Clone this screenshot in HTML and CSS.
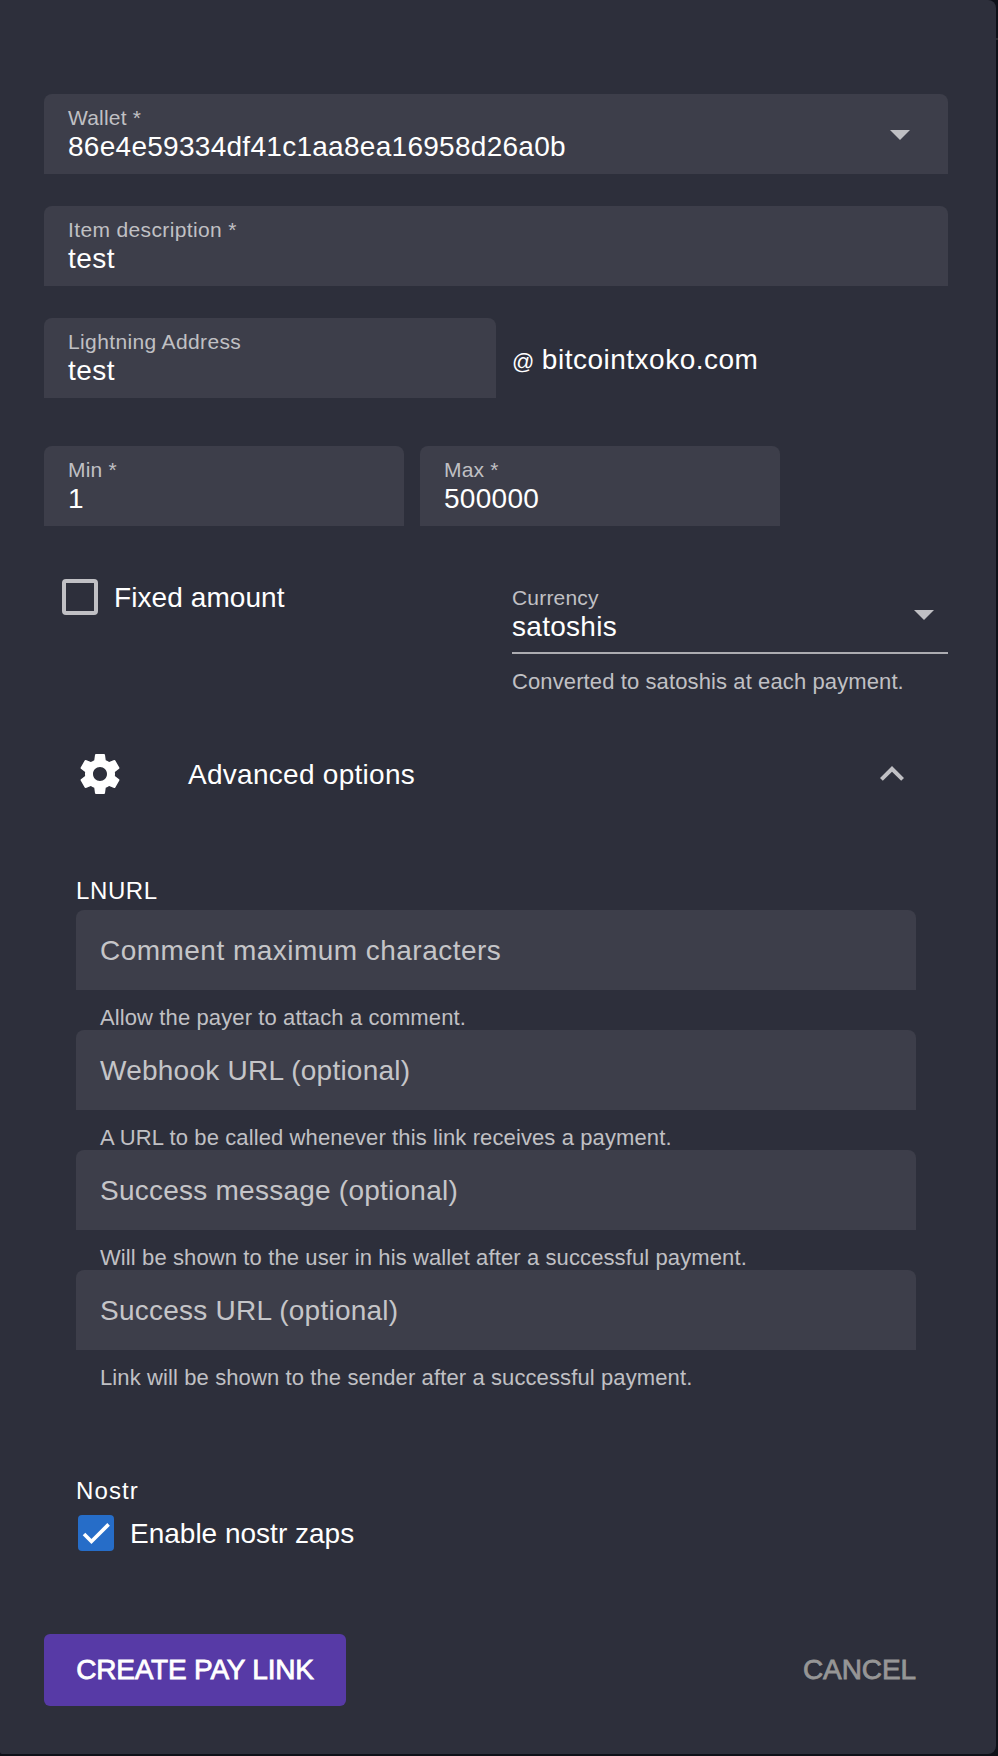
FILE: index.html
```html
<!DOCTYPE html>
<html lang="en">
<head>
<meta charset="utf-8">
<title>Pay link</title>
<link rel="stylesheet" href="styles.css">
</head>
<body>
<form class="dialog">
  <div class="field">
    <div class="field-text"><span class="label tight">Wallet *</span><span class="value">86e4e59334df41c1aa8ea16958d26a0b</span></div>
    <svg class="icon" viewBox="0 0 24 24"><path d="M7 10l5 5 5-5z"/></svg>
  </div>
  <div class="field">
    <div class="field-text"><span class="label">Item description *</span><span class="value loose">test</span></div>
  </div>
  <div class="row address-row">
    <div class="field address">
      <div class="field-text"><span class="label">Lightning Address</span><span class="value loose">test</span></div>
    </div>
    <div class="domain"><span class="at">@</span><span>bitcointxoko.com</span></div>
  </div>
  <div class="row amount-row">
    <div class="field amount">
      <div class="field-text"><span class="label tight">Min *</span><span class="value">1</span></div>
    </div>
    <div class="field amount">
      <div class="field-text"><span class="label tight">Max *</span><span class="value">500000</span></div>
    </div>
  </div>
  <div class="row currency-row">
    <div class="check fixed"><span class="box"></span><span class="check-label">Fixed amount</span></div>
    <div class="currency">
      <div class="field underlined">
        <div class="field-text"><span class="label tight">Currency</span><span class="value">satoshis</span></div>
        <svg class="icon" viewBox="0 0 24 24"><path d="M7 10l5 5 5-5z"/></svg>
      </div>
      <div class="hint currency-hint">Converted to satoshis at each payment.</div>
    </div>
  </div>
  <div class="advanced">
    <svg class="icon gear" viewBox="0 0 24 24"><path d="M19.43 12.98c.04-.32.07-.64.07-.98s-.03-.66-.07-.98l2.11-1.65c.19-.15.24-.42.12-.64l-2-3.46c-.12-.22-.39-.3-.61-.22l-2.49 1c-.52-.4-1.08-.73-1.69-.98l-.38-2.65C14.46 2.18 14.25 2 14 2h-4c-.25 0-.46.18-.49.42l-.38 2.65c-.61.25-1.17.59-1.69.98l-2.49-1c-.23-.09-.49 0-.61.22l-2 3.46c-.13.22-.07.49.12.64l2.11 1.65c-.04.32-.07.65-.07.98s.03.66.07.98l-2.11 1.65c-.19.15-.24.42-.12.64l2 3.46c.12.22.39.3.61.22l2.49-1c.52.4 1.08.73 1.69.98l.38 2.65c.03.24.24.42.49.42h4c.25 0 .46-.18.49-.42l.38-2.65c.61-.25 1.17-.59 1.69-.98l2.49 1c.23.09.49 0 .61-.22l2-3.46c.12-.22.07-.49-.12-.64l-2.11-1.65zM12 15.5c-1.93 0-3.5-1.57-3.5-3.5s1.57-3.5 3.5-3.5 3.5 1.57 3.5 3.5-1.57 3.5-3.5 3.5z"/></svg>
    <span class="advanced-title">Advanced options</span>
    <svg class="icon" viewBox="0 0 24 24"><path d="M12 8l-6 6 1.41 1.41L12 10.83l4.59 4.58L18 14z"/></svg>
  </div>
  <section class="section">
    <h2 class="heading">LNURL</h2>
    <div class="field"><span class="placeholder loose">Comment maximum characters</span></div>
    <div class="hint">Allow the payer to attach a comment.</div>
    <div class="field"><span class="placeholder">Webhook URL (optional)</span></div>
    <div class="hint">A URL to be called whenever this link receives a payment.</div>
    <div class="field"><span class="placeholder">Success message (optional)</span></div>
    <div class="hint">Will be shown to the user in his wallet after a successful payment.</div>
    <div class="field"><span class="placeholder">Success URL (optional)</span></div>
    <div class="hint">Link will be shown to the sender after a successful payment.</div>
  </section>
  <section class="section nostr">
    <h2 class="heading nostr-heading">Nostr</h2>
    <div class="check"><span class="box checked"><svg class="tick" viewBox="0 0 24 24"><path d="M1.73 12.91l6.37 6.37L22.79 4.59"/></svg></span><span class="check-label zaps">Enable nostr zaps</span></div>
  </section>
  <div class="actions">
    <button type="button" class="btn primary">CREATE PAY LINK</button>
    <button type="button" class="btn flat">CANCEL</button>
  </div>
</form>
</body>
</html>
```
FILE: styles.css
```css
* { box-sizing: border-box; }

body {
  margin: 0;
  background: linear-gradient(#0e1018 38px, #2a2b30 38px, #2a2b30 40px, #0e1018 40px);
  font-family: "Liberation Sans", Arial, sans-serif;
  font-size: 28px;
  line-height: 36px;
  color: #fff;
}

.dialog {
  width: 996px;
  height: 1754px;
  padding: 94px 48px 0 44px;
  background: #2d2f3b;
  border-radius: 0 8px 8px 2px;
}

.field {
  display: flex;
  height: 80px;
  padding: 0 24px;
  background: #3d3e4a;
  border-radius: 8px 8px 0 0;
}
.dialog > .field { margin-bottom: 32px; }
.field .icon { margin-top: 16px; }

.field-text {
  display: flex;
  flex: 1;
  flex-direction: column;
  padding-top: 11px;
}
.label {
  height: 24px;
  font-size: 21px;
  line-height: 26px;
  letter-spacing: 0.37px;
  color: #c0c0c4;
}
.label.tight { letter-spacing: 0.18px; }
.value { letter-spacing: 0.28px; white-space: nowrap; }
.placeholder { padding-top: 23px; letter-spacing: 0.24px; color: #c5c5c8; }
.value.loose, .placeholder.loose { letter-spacing: 0.47px; }

.icon { width: 48px; height: 48px; fill: #c0c0c4; flex: none; }

.row { display: flex; }
.address-row { gap: 16px; margin-bottom: 48px; }
.address { width: 452px; }
.domain {
  display: flex;
  align-items: baseline;
  gap: 7px;
  padding-top: 24px;
  letter-spacing: 0.5px;
}
.at { font-size: 22px; line-height: 30px; }
.amount-row { gap: 16px; margin-bottom: 48px; }
.amount { width: 360px; }

.currency-row { justify-content: space-between; height: 168px; }
.currency { width: 436px; }
.underlined {
  padding: 0;
  background: none;
  border-bottom: 2px solid #acacb1;
  border-radius: 0;
}

.hint {
  height: 40px;
  padding: 15px 24px 0;
  font-size: 22px;
  line-height: 26px;
  letter-spacing: 0.11px;
  white-space: nowrap;
  color: #c0c0c4;
}
.currency-hint { padding-left: 0; padding-right: 0; }

.check { display: flex; align-items: center; gap: 16px; height: 40px; }
.check-label { padding-top: 2px; letter-spacing: 0.08px; }
.check-label.zaps { letter-spacing: 0; }
.fixed { padding-left: 18px; margin-top: 3px; }
.box {
  width: 36px;
  height: 36px;
  border: 4px solid #c0c0c4;
  border-radius: 4px;
}
.checked { display: flex; padding: 4px; background: #266dc8; border: 0; }
.tick { width: 28px; height: 28px; fill: none; stroke: #fff; stroke-width: 3.12; }

.advanced {
  display: flex;
  align-items: center;
  height: 64px;
  padding: 0 32px;
}
.gear { fill: #fff; }
.advanced-title { flex: 1; padding: 2px 0 0 64px; letter-spacing: 0.28px; }

.section { padding: 71px 32px 0; }
.heading {
  height: 33px;
  margin: 0;
  font-size: 24px;
  font-weight: 400;
  line-height: 28px;
  letter-spacing: 0.6px;
}
.nostr { padding-top: 87px; }
.nostr .check { padding-left: 2px; }
.nostr-heading { height: 36px; letter-spacing: 1.1px; }

.actions {
  display: flex;
  justify-content: space-between;
  margin-top: 81px;
}
.btn {
  height: 72px;
  padding: 0 32px;
  border: 0;
  border-radius: 6px;
  background: none;
  font: inherit;
  white-space: nowrap;
  -webkit-text-stroke: 0.8px currentColor;
}
.primary { width: 302px; background: #573aa6; color: #fff; letter-spacing: -0.2px; }
.flat { color: #969696; letter-spacing: -0.1px; }
```
